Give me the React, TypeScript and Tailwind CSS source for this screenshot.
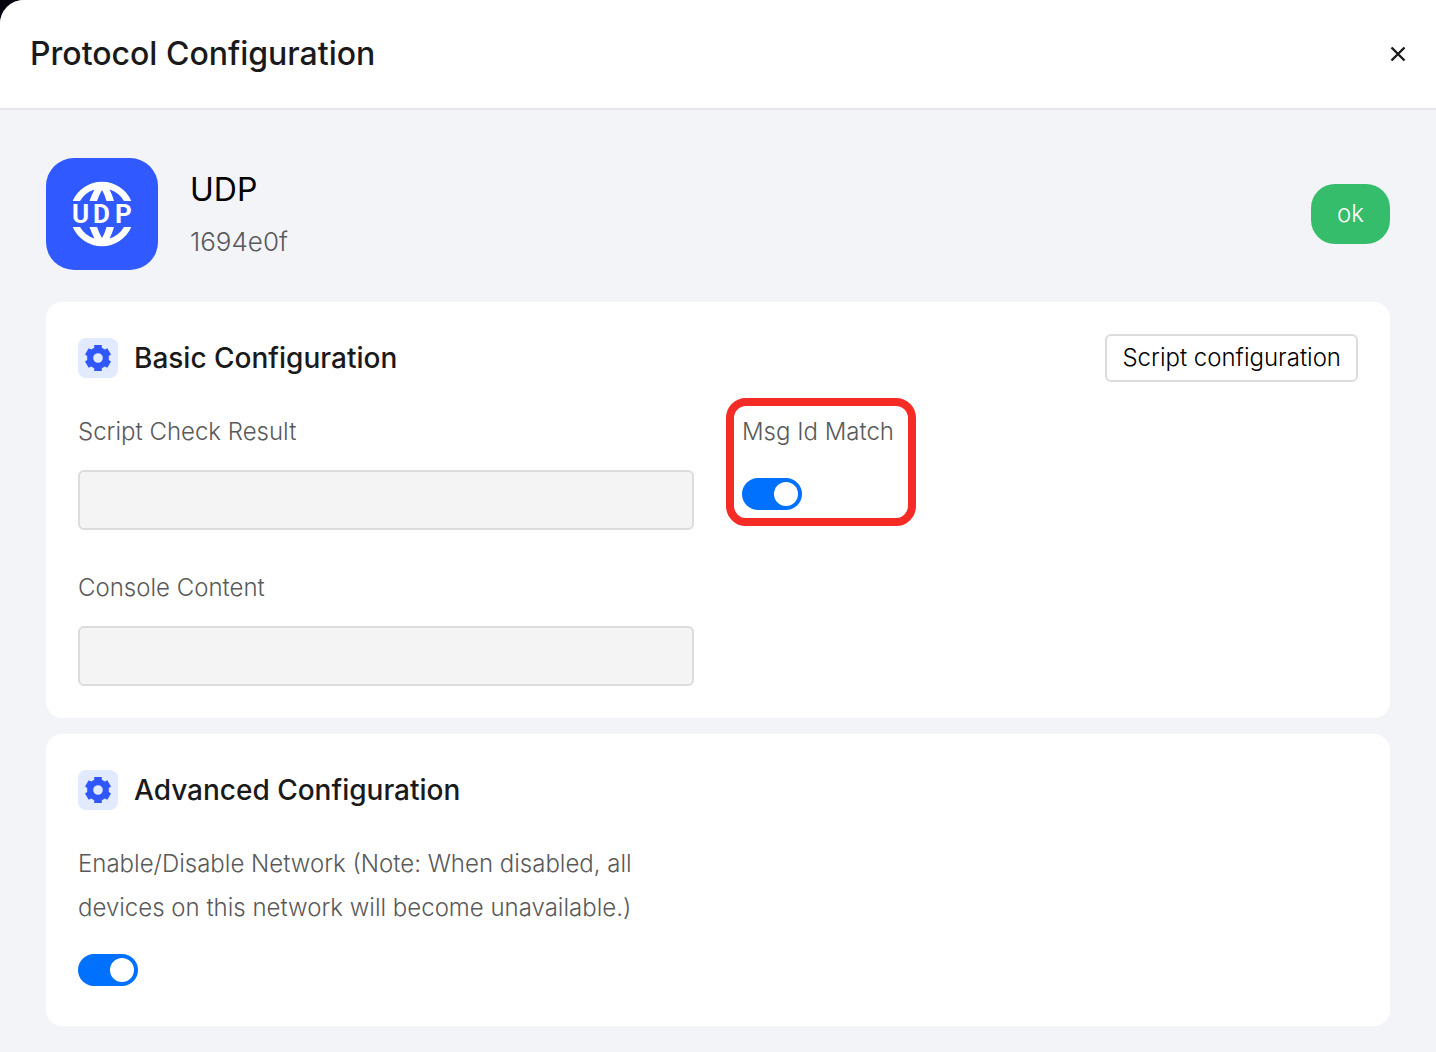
import { useState } from 'react';
import type { ReactNode } from 'react';

interface SwitchProps {
    id: string;
    checked: boolean;
    onChange: (checked: boolean) => void;
}

interface SectionProps {
    title: string;
    action?: ReactNode;
    children: ReactNode;
}

interface TextFieldProps {
    id: string;
    label: string;
}

function Switch({ id, checked, onChange }: SwitchProps) {
    return (
        <input
            id={id}
            type="checkbox"
            role="switch"
            checked={checked}
            onChange={(e) => onChange(e.target.checked)}
            className="relative block w-[60px] h-8 my-2 appearance-none rounded-full bg-gray-300 checked:bg-[#0070ff] cursor-pointer transition-colors before:absolute before:top-1 before:left-1 checked:before:left-8 before:w-6 before:h-6 before:rounded-full before:bg-white"
        />
    );
}

function TextField({ id, label }: TextFieldProps) {
    return (
        <div className="flex flex-col gap-4">
            <label htmlFor={id} className="text-2xl leading-[44px] font-light text-[#595959]">{label}</label>
            <input
                id={id}
                type="text"
                disabled
                className="w-full h-[60px] px-4 text-2xl rounded-md border-2 border-[#dcdcdc] bg-[#f4f4f4]"
            />
        </div>
    );
}

function GearIcon() {
    return (
        <span className="flex w-10 h-10 items-center justify-center rounded-lg bg-[#e1eaff]">
            <svg viewBox="0 0 40 40" className="w-10 h-10" fill="#3056ff" fillRule="evenodd" aria-hidden="true">
                <path d="M16.2 7h7.600v2.800l3 1.700 2.500-1.300 3.700 6.300-2.200 1.500v4l2.200 1.500-3.700 6.300-2.500-1.300-3 1.700v2.800h-7.600v-2.800l-3-1.700-2.500 1.300-3.700-6.300 2.200-1.500v-4l-2.200-1.500 3.700-6.300 2.500 1.300 3-1.700zM20 15.200a4.800 4.800 0 1 0 0 9.600 4.800 4.800 0 0 0 0-9.600z" />
            </svg>
        </span>
    );
}

function UdpLogo() {
    return (
        <svg viewBox="0 0 112 112" className="w-28 h-28 rounded-[28px] bg-[#305aff]" role="img" aria-label="UDP">
            <g fill="#fff">
                <path d="M26.7 43A32 32 0 0 1 85.3 43H78Q73 34.500 63.500 31.500Q66 36 68 43H60.500Q59 37 56 32Q53 37 51 43H43.500Q46 36 48.500 31.500Q39 34.500 34 43Z" />
                <path d="M26.7 69A32 32 0 0 0 85.3 69H78Q73 77.500 63.500 80.500Q66 76 68 69H60.500Q59 75 56 80Q53 75 51 69H43.500Q46 76 48.500 80.500Q39 77.500 34 69Z" />
            </g>
            <text x="26 47 69" y="65" fill="#fff" className="font-[Roboto,sans-serif] text-[26px] font-bold">UDP</text>
        </svg>
    );
}

function Section({ title, action, children }: SectionProps) {
    return (
        <section className="flex flex-col gap-7 rounded-2xl bg-white p-8">
            <div className="flex h-12 items-center justify-between">
                <div className="flex items-center gap-4">
                    <GearIcon />
                    <h2 className="text-[28px] leading-10 font-medium text-[#1a1a1a]">{title}</h2>
                </div>
                {action}
            </div>
            <div className="grid grid-cols-2 items-start gap-x-12 gap-y-9">{children}</div>
        </section>
    );
}

export default function App() {
    const [msgIdMatch, setMsgIdMatch] = useState(true);
    const [networkEnabled, setNetworkEnabled] = useState(true);

    return (
        <div className="min-h-screen bg-[#05040c] font-[Inter,sans-serif]">
            <div className="flex min-h-screen flex-col overflow-hidden rounded-tl-[24px] bg-[#f2f4f8]">
                <header className="flex h-[110px] items-center justify-between border-b-2 border-[#e6e6e6] bg-white px-[30px]">
                    <h1 className="text-[32px] leading-10 font-medium text-[#1a1a1a]">Protocol Configuration</h1>
                    <button type="button" aria-label="Close" className="cursor-pointer">
                        <svg viewBox="0 0 16 16" className="w-4 h-4" stroke="#1a1a1a" strokeWidth="2.4" aria-hidden="true">
                            <path d="M1.5 1.5l13 13M14.5 1.5l-13 13" />
                        </svg>
                    </button>
                </header>

                <main className="flex flex-col px-[46px] pt-12 pb-6">
                    {/* Protocol summary */}
                    <div className="flex items-center justify-between mb-8">
                        <div className="flex items-center gap-8">
                            <UdpLogo />
                            <div className="flex flex-col gap-3 pt-1">
                                <p className="text-[32px] leading-10 text-black">UDP</p>
                                <p className="text-[26px] leading-10 font-light text-[#595959]">1694e0f</p>
                            </div>
                        </div>
                        <span className="flex h-[60px] items-center rounded-3xl bg-[#36bd6b] px-[26px] text-2xl font-light text-white">ok</span>
                    </div>

                    <div className="flex flex-col gap-4">
                        <Section
                            title="Basic Configuration"
                            action={
                                <button type="button" className="h-12 px-[15px] rounded-md border-2 border-[#dcdcdc] bg-white text-2xl leading-10 font-light text-black cursor-pointer">
                                    Script configuration
                                </button>
                            }
                        >
                            <TextField id="script-check" label="Script Check Result" />
                            <div className="relative flex w-fit flex-col gap-4">
                                <label htmlFor="msg-id" className="text-2xl leading-[44px] font-light text-[#595959]">Msg Id Match</label>
                                <Switch id="msg-id" checked={msgIdMatch} onChange={setMsgIdMatch} />
                                {/* Highlight frame */}
                                <span className="pointer-events-none absolute -top-3 -bottom-2 -left-4 -right-[22px] rounded-[20px] border-8 border-[#f52b25]" />
                            </div>
                            <TextField id="console-content" label="Console Content" />
                        </Section>

                        <Section title="Advanced Configuration">
                            <div className="flex flex-col gap-4">
                                <label htmlFor="network" className="text-2xl leading-[44px] font-light text-[#595959]">
                                    Enable/Disable Network (Note: When disabled, all devices on this network will become unavailable.)
                                </label>
                                <Switch id="network" checked={networkEnabled} onChange={setNetworkEnabled} />
                            </div>
                        </Section>
                    </div>
                </main>
            </div>
        </div>
    );
}
